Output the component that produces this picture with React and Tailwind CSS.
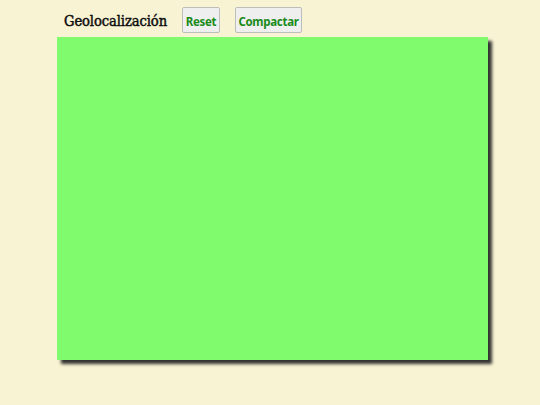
export default function App() {
  return (
    <div className="w-[540px] h-[405px] bg-[#f8f3d2] overflow-hidden">
      <div className="flex items-center h-[37px] pt-[7px] pb-[4px] pl-[64px]">
        <h1 className="w-[118px] shrink-0 text-[14.6px] text-[#0d0d0d] leading-none pt-[3px] tracking-[-0.1px] [-webkit-text-stroke:0.45px_#0d0d0d]" style={{ fontFamily: '"DejaVu Serif Condensed", "DejaVu Serif", serif' }}>
          Geolocalización
        </h1>
        <button className="h-[26px] w-[38px] pt-[3px] bg-[#efefef] border border-[#bdbdbd] rounded-[2px] text-[#1a8a1a] font-bold text-[11.5px] tracking-[-0.3px] flex items-center justify-center" style={{ fontFamily: '"Noto Sans", sans-serif' }}>
          Reset
        </button>
        <button className="ml-[15px] h-[26px] w-[67px] pt-[3px] bg-[#efefef] border border-[#bdbdbd] rounded-[2px] text-[#1a8a1a] font-bold text-[11.5px] tracking-[-0.3px] flex items-center justify-center" style={{ fontFamily: '"Noto Sans", sans-serif' }}>
          Compactar
        </button>
      </div>
      <div className="ml-[57px] w-[431px] h-[323px] bg-[#80fb6d] shadow-[4px_4px_3px_#333]"></div>
    </div>
  );
}
